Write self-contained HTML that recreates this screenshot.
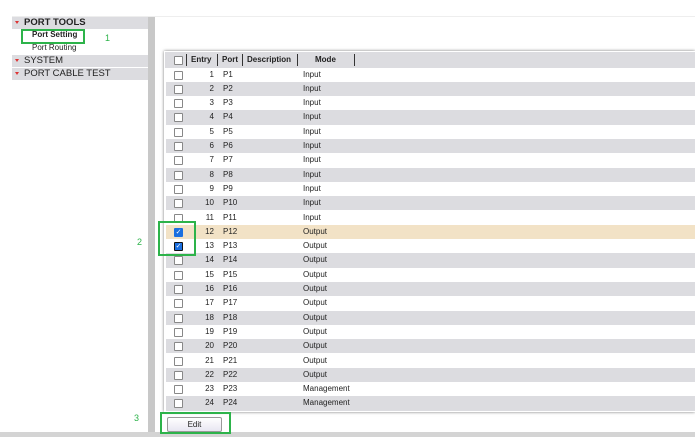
<!DOCTYPE html>
<html><head><style>
*{margin:0;padding:0;box-sizing:border-box}
body{width:695px;height:437px;background:#fff;font-family:"Liberation Sans",Arial,sans-serif;position:relative;overflow:hidden;font-size:8px;color:#222}
.a{position:absolute}
.sb{left:12px;top:17px;width:136px;height:415px;background:#fff}
.gh{background:#dcdce0;height:12px;font-size:9.5px;padding-left:12px;line-height:12px;position:absolute;left:0;width:136px}
.gh:before{content:"";position:absolute;left:3px;top:4px;border:2.5px solid transparent;border-top:3px solid #d33;}
.cb{position:absolute;width:9px;height:9px;border:1px solid #888;background:#fff;border-radius:1px}
.row{position:absolute;left:166px;width:529px;height:14.3px;font-size:8px;line-height:14.3px}
.row span{position:absolute}
</style></head><body>
<div class="a" style="left:12px;top:16px;width:683px;height:1px;background:#eee"></div>
<div class="a sb">
 <div class="gh" style="top:0;font-weight:bold">PORT TOOLS</div>
 <div class="a" style="left:20px;top:13px;font-size:8px;font-weight:bold">Port Setting</div>
 <div class="a" style="left:20px;top:26px;font-size:8px">Port Routing</div>
 <div class="gh" style="top:38px">SYSTEM</div>
 <div class="gh" style="top:51px">PORT CABLE TEST</div>
</div>
<div class="a" style="left:21px;top:29px;width:64px;height:15px;border:2.5px solid #2db34a"></div>
<div class="a" style="left:105px;top:33px;color:#2db34a;font-size:9px">1</div>
<div class="a" style="left:148px;top:17px;width:7px;height:415px;background:#c8c8c8"></div>
<div class="a" style="left:0;top:432px;width:695px;height:5px;background:#d4d4d4"></div>
<div class="a" style="left:164px;top:51px;width:531px;height:361px;box-shadow:0 0 3px #777;background:#fff"></div>
<div class="a" style="left:165px;top:52px;width:530px;height:16px;background:#dcdce0;font-weight:bold;font-size:8px;line-height:16px">
 <div class="cb" style="left:9px;top:4px"></div>
 <span class="a" style="left:21px;top:2px;height:12px;border-left:1px solid #333"></span>
 <span class="a" style="left:26px">Entry</span>
 <span class="a" style="left:52px;top:2px;height:12px;border-left:1px solid #333"></span>
 <span class="a" style="left:57px">Port</span>
 <span class="a" style="left:77px;top:2px;height:12px;border-left:1px solid #333"></span>
 <span class="a" style="left:82px">Description</span>
 <span class="a" style="left:132px;top:2px;height:12px;border-left:1px solid #333"></span>
 <span class="a" style="left:150px">Mode</span>
 <span class="a" style="left:189px;top:2px;height:12px;border-left:1px solid #333"></span>
</div>
<div id="rows"></div>
<script>
var h='';for(var i=1;i<=24;i++){var t=67.5+(i-1)*14.3;var m=i<=11?'Input':(i<=22?'Output':'Management');
var bg=i==12?'background:#f2e2c6':(i%2==0?'background:#dcdce0':'');
var ck=(i==12||i==13);
h+='<div class="row" style="top:'+t+'px;'+bg+'">'+(ck?'<div class="cb" style="left:8px;top:3px;background:#1a6fe0;border-color:'+(i==13?'#111;border-width:1.5px':'#1a6fe0')+';color:#fff;font-size:7px;line-height:7px;text-align:center">✓</div>':'<div class="cb" style="left:8px;top:3px"></div>')+
'<span style="left:30px;width:18px;text-align:right">'+i+'</span><span style="left:57px">P'+i+'</span><span style="left:137px">'+m+'</span></div>';}
document.getElementById('rows').innerHTML=h;
</script>
<div class="a" style="left:158px;top:221px;width:38px;height:35px;border:2.5px solid #2db34a"></div>
<div class="a" style="left:137px;top:237px;color:#2db34a;font-size:9px">2</div>
<div class="a" style="left:134px;top:413px;color:#2db34a;font-size:9px">3</div>
<div class="a" style="left:167px;top:417px;width:55px;height:15px;border:1px solid #999;border-radius:2px;background:linear-gradient(#fff,#e8e6f2);text-align:center;font-size:8px;line-height:13px">Edit</div>
<div class="a" style="left:160px;top:412px;width:71px;height:22px;border:2.5px solid #2db34a"></div>
</body></html>
